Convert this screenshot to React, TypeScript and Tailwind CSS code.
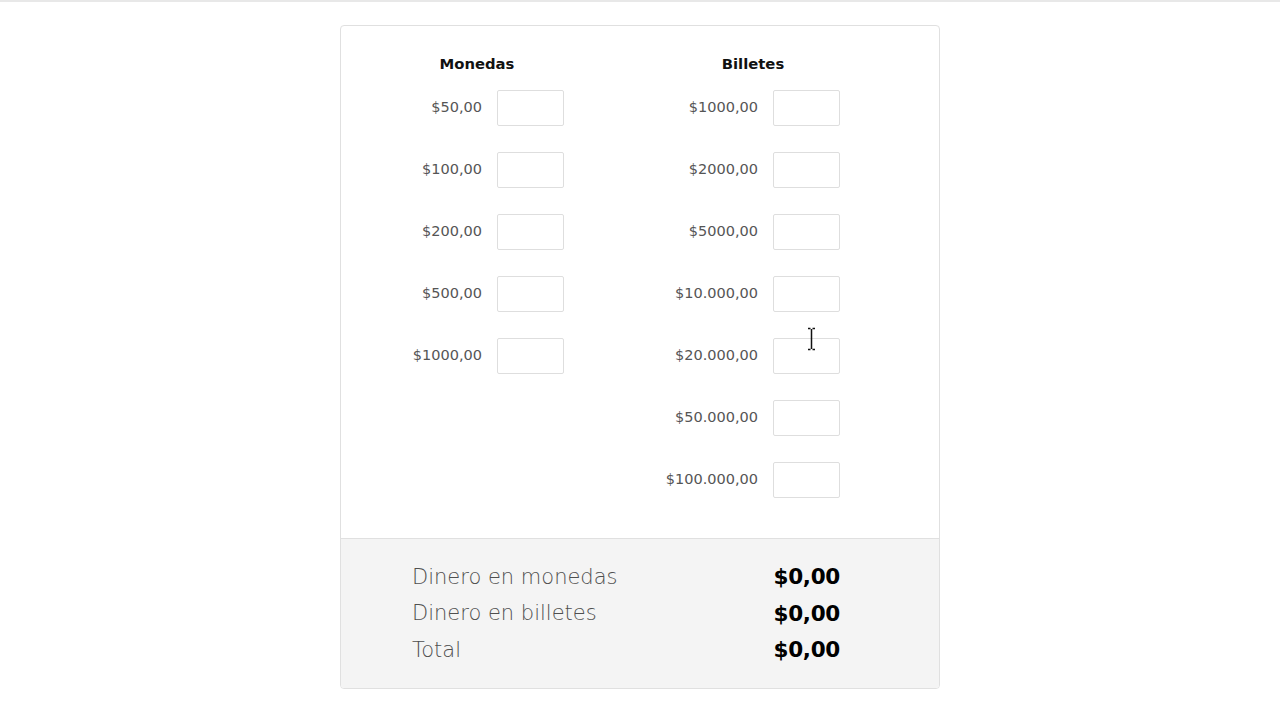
import React from 'react';

const monedas = ['$50,00', '$100,00', '$200,00', '$500,00', '$1000,00'];
const billetes = ['$1000,00', '$2000,00', '$5000,00', '$10.000,00', '$20.000,00', '$50.000,00', '$100.000,00'];

const font = { fontFamily: '"DejaVu Sans", "Liberation Sans", sans-serif' };

function Column({ title, items }: { title: string; items: string[] }) {
  return (
    <div className="w-[276px] flex flex-col">
      <h3 className="w-[226px] text-center text-[14.8px] leading-5 font-bold text-[#111]">{title}</h3>
      <div className="mt-4 flex flex-col gap-[26px]">
        {items.map(v => (
          <div key={v} className="flex items-center">
            <span className="w-[118px] text-right text-[14.5px] text-[#555]">{v}</span>
            <input className="ml-[15px] w-[67px] h-[36px] border border-[#dedede] rounded-[2px] bg-white outline-none" />
          </div>
        ))}
      </div>
    </div>
  );
}

function SummaryRow({ label, value }: { label: string; value: string }) {
  return (
    <div className="flex items-center justify-between h-[36.5px]">
      <span className="text-[21px] font-extralight text-[#4f4f4f]">{label}</span>
      <span className="text-[21.5px] font-bold text-black tracking-[-0.3px]">{value}</span>
    </div>
  );
}

export default function App() {
  return (
    <div className="min-h-[720px] bg-white border-t-2 border-[#e8e8e8] relative" style={font}>
      <div className="mx-auto mt-[23px] w-[600px] border border-[#e0e0e0] rounded-[4px] overflow-hidden">
        <div className="flex pl-[23px] pt-[28px] pb-[40px]">
          <Column title="Monedas" items={monedas} />
          <Column title="Billetes" items={billetes} />
        </div>
        <div className="bg-[#f4f4f4] border-t border-[#e0e0e0] pt-[20px] pb-[19px]">
          <div className="ml-[71px] w-[428px]">
            <SummaryRow label="Dinero en monedas" value="$0,00" />
            <SummaryRow label="Dinero en billetes" value="$0,00" />
            <SummaryRow label="Total" value="$0,00" />
          </div>
        </div>
      </div>
      <svg className="absolute left-[806px] top-[325px]" width="11" height="24" viewBox="0 0 11 24">
        <path d="M2 1.5h2.5M6.5 1.5H9M5.5 2v20M2 22.5h2.5M6.5 22.5H9" stroke="#111" strokeWidth="1.5" fill="none" />
      </svg>
    </div>
  );
}
